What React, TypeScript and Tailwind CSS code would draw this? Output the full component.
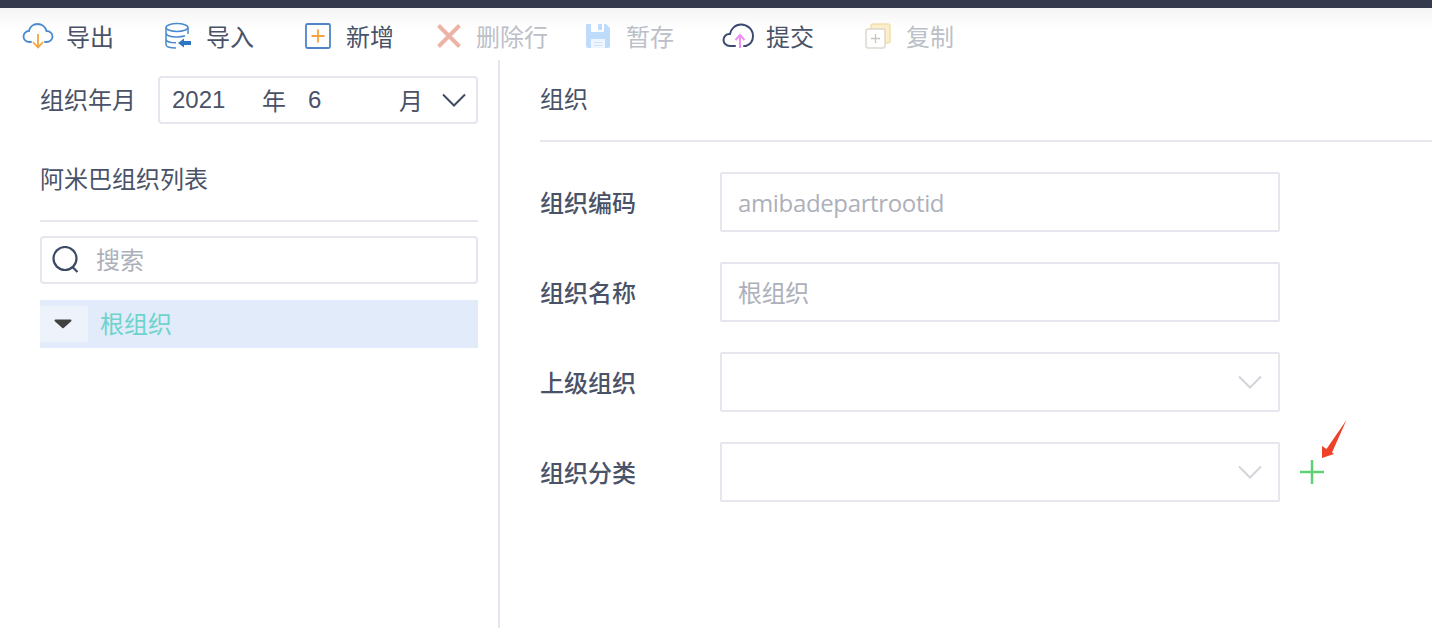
const Chevron = ({ color, width = 2 }: { color: string; width?: number }) => (
  <svg width="24" height="14" viewBox="0 0 24 14" fill="none" className="shrink-0">
    <path d="M1 1.500l11 11 11-11" stroke={color} strokeWidth={width} />
  </svg>
);

const CloudOut = () => (
  <svg width="32" height="28" viewBox="0 0 32 28" fill="none">
    <path d="M9 20H7.500C4 20 1.500 17.500 1.500 14.500S4 9 7 9c.8-4 4.200-7 8.500-7 4.500 0 8 3 9 7 3.500 0 6 2.500 6 5.500S28 20 24.500 20H23" stroke="#4a8bd0" strokeWidth="1.800" strokeLinecap="round" />
    <path d="M16 12v13M11 20l5 5.500 5-5.500" stroke="#f5a33c" strokeWidth="1.800" />
  </svg>
);

const DbIn = () => (
  <svg width="28" height="28" viewBox="0 0 28 28" fill="none">
    <ellipse cx="13" cy="5.500" rx="11" ry="4" stroke="#4a8bd0" strokeWidth="1.500" />
    <path d="M2 5.500v17c0 2.500 5 3.500 10 3.500M24 5.500V12M2 11c0 2.500 5 4 11 4 3 0 6-.4 8-1.200M2 17c0 2.500 5 3.800 10 3.800" stroke="#4a8bd0" strokeWidth="1.500" />
    <path d="M14 21l6-4.500V19h7v4h-7v2.500z" fill="#2f76c0" />
  </svg>
);

const AddBox = () => (
  <svg width="26" height="26" viewBox="0 0 26 26" fill="none" className="ml-px">
    <rect x="1" y="1" width="24" height="24" rx="1.500" stroke="#4f84cc" strokeWidth="1.800" />
    <path d="M13 6.500v13M6.500 13h13" stroke="#f5a33c" strokeWidth="1.800" />
  </svg>
);

const Cross = () => (
  <svg width="26" height="26" viewBox="0 0 26 26" fill="none">
    <path d="M2.500 2.500l21 21M23.500 2.500l-21 21" stroke="#edb3a8" strokeWidth="4" />
  </svg>
);

const Floppy = () => (
  <svg width="26" height="26" viewBox="0 0 26 26">
    <path d="M2 1h4v7a1 1 0 0 0 1 1h11a1 1 0 0 0 1-1V1h2l4 4v18a2 2 0 0 1-2 2H3a2 2 0 0 1-2-2V2a1 1 0 0 1 1-1z" fill="#bedbfb" />
    <rect x="13" y="1" width="4" height="6" fill="#bedbfb" />
    <rect x="6" y="16" width="14" height="9" fill="#eef5fe" />
    <path d="M9 19.500h8M9 22.500h8" stroke="#cfe3fb" strokeWidth="1.200" />
  </svg>
);

const CloudUp = () => (
  <svg width="34" height="26" viewBox="0 0 34 26" fill="none">
    <path d="M13 23H8c-3.500 0-6.500-2.500-6.500-6S4.500 10.500 8 11c1-5 5-9.500 11-9.500 6.500 0 12 5 12 11.500 0 5-3 8.500-7 10h-2" stroke="#3a4a72" strokeWidth="2" strokeLinecap="round" />
    <path d="M18 12v13M13.500 17l4.500-5 4.500 5" stroke="#f18ef5" strokeWidth="2" />
  </svg>
);

const CopyBox = () => (
  <svg width="26" height="26" viewBox="0 0 26 26" fill="none">
    <rect x="6" y="1" width="19" height="19" rx="2" fill="#fbeec8" stroke="#f0dfb0" strokeWidth="1.500" />
    <rect x="1" y="6" width="19" height="19" rx="2" fill="#fff" stroke="#ddd8d0" strokeWidth="1.500" />
    <path d="M10.500 11v9M6 15.500h9" stroke="#c9c6c0" strokeWidth="1.300" />
  </svg>
);

const SearchIcon = () => (
  <svg width="28" height="28" viewBox="0 0 28 28" fill="none">
    <circle cx="13" cy="12.500" r="11.500" stroke="#3c4a66" strokeWidth="2.200" />
    <path d="M20.500 21l5 5" stroke="#3c4a66" strokeWidth="2.200" />
  </svg>
);

const toolbar = [
  { label: '导出', icon: <CloudOut />, cls: 'w-[142px]', box: 'w-[44px]', text: 'text-[#4a5268]' },
  { label: '导入', icon: <DbIn />, cls: 'w-[140px]', box: 'w-[42px]', text: 'text-[#4a5268]' },
  { label: '新增', icon: <AddBox />, cls: 'w-[132px]', box: 'w-[42px]', text: 'text-[#4a5268]' },
  { label: '删除行', icon: <Cross />, cls: 'w-[149px]', box: 'w-[40px]', text: 'text-[#bcbfc8]' },
  { label: '暂存', icon: <Floppy />, cls: 'w-[137px]', box: 'w-[41px]', text: 'text-[#bcbfc8]' },
  { label: '提交', icon: <CloudUp />, cls: 'w-[143px]', box: 'w-[44px]', text: 'text-[#4a5268]' },
  { label: '复制', icon: <CopyBox />, cls: 'w-[100px]', box: 'w-[41px]', text: 'text-[#bcbfc8]' },
];

const fields = [
  { label: '组织编码', value: 'amibadepartrootid' },
  { label: '组织名称', value: '根组织' },
  { label: '上级组织', select: true },
  { label: '组织分类', select: true, add: true },
];

export default function App() {
  return (
    <div className="w-[1432px] h-[628px] overflow-hidden bg-white flex flex-col font-['Noto_Sans_CJK_SC','Liberation_Sans',sans-serif] text-[24px] text-[#4a5268]">
      <div className="h-2 bg-[#343a4c] shrink-0" />

      {/* Toolbar */}
      <div className="h-[52px] shrink-0 flex items-end pl-[22px] pb-[6px] bg-gradient-to-b from-[#f4f4f4] to-white to-40%">
        {toolbar.map((item) => (
          <div key={item.label} className={`flex items-center h-[36px] shrink-0 ${item.cls}`}>
            <div className={`flex items-center shrink-0 ${item.box}`}>{item.icon}</div>
            <span className={`leading-[36px] whitespace-nowrap ${item.text}`}>{item.label}</span>
          </div>
        ))}
      </div>

      <div className="flex flex-1 min-h-0">
        {/* Left panel */}
        <div className="w-[500px] shrink-0 border-r-2 border-[#e6e7ee] pl-10 pr-5 pt-4">
          <div className="flex items-center h-12 justify-between">
            <span className="leading-8 whitespace-nowrap mb-[2px]">组织年月</span>
            <div className="w-[320px] h-12 border-2 border-[#e6e7ee] rounded-[4px] flex items-center pl-3 pr-[10px]">
              <span className="w-[90px] font-['Liberation_Sans',sans-serif]">2021</span>
              <span className="w-[46px]">年</span>
              <span className="flex-1 font-['Liberation_Sans',sans-serif]">6</span>
              <span className="mr-[19px]">月</span>
              <Chevron color="#3f4a63" />
            </div>
          </div>

          <div className="h-[98px] border-b-2 border-[#e6e7ee] flex items-center">
            <span className="mt-[12px]">阿米巴组织列表</span>
          </div>

          <div className="mt-[14px] h-12 border-2 border-[#e6e7ee] rounded-[4px] flex items-center pl-[10px]">
            <SearchIcon />
            <span className="ml-[16px] mb-[2px] text-[#adb0ba]">搜索</span>
          </div>

          <div className="mt-4 h-12 bg-[#e1ebfa] flex items-center">
            <div className="w-12 h-9 bg-[#eef2fa] flex items-center justify-center">
              <svg width="20" height="12" viewBox="0 0 20 12" className="mr-[2px]">
                <path d="M2.500 1.500h15a1 1 0 0 1 .7 1.700L10.700 10a1 1 0 0 1-1.400 0L1.800 3.200a1 1 0 0 1 .7-1.700z" fill="#404040" />
              </svg>
            </div>
            <span className="ml-3 mb-[3px] text-[#6fd3cd]">根组织</span>
          </div>
        </div>

        {/* Right panel */}
        <div className="flex-1 pl-10 pt-4">
          <div className="h-[66px] border-b-2 border-[#e6e7ee] flex items-start pt-[6px]">
            <span className="leading-8">组织</span>
          </div>

          <div className="mt-[30px] flex flex-col gap-[30px]">
            {fields.map((f) => (
              <div key={f.label} className="flex items-center h-[60px]">
                <span className="w-[180px] shrink-0 font-medium">{f.label}</span>
                <div className="w-[560px] h-[60px] shrink-0 border-2 border-[#e6e7ee] rounded-[2px] flex items-center justify-between pl-4 pr-4">
                  <span className="mt-[2px] text-[#adb0ba] tracking-[-0.35px] font-['Open_Sans','Noto_Sans_CJK_SC',sans-serif]">{f.value}</span>
                  {f.select && <Chevron color="#d2d4da" />}
                </div>
                {f.add && (
                  <div className="relative ml-5">
                    <svg width="24" height="24" viewBox="0 0 24 24" fill="none">
                      <path d="M12 0v24M0 12h24" stroke="#5fd174" strokeWidth="2.500" />
                    </svg>
                    <svg width="30" height="42" viewBox="0 0 30 42" className="absolute left-[20px] top-[-42px]">
                      <path d="M26.500 2L12 34.500l2 1.500-12 4V28l4.500 3z" fill="#ee4127" />
                    </svg>
                  </div>
                )}
              </div>
            ))}
          </div>
        </div>
      </div>
    </div>
  );
}
